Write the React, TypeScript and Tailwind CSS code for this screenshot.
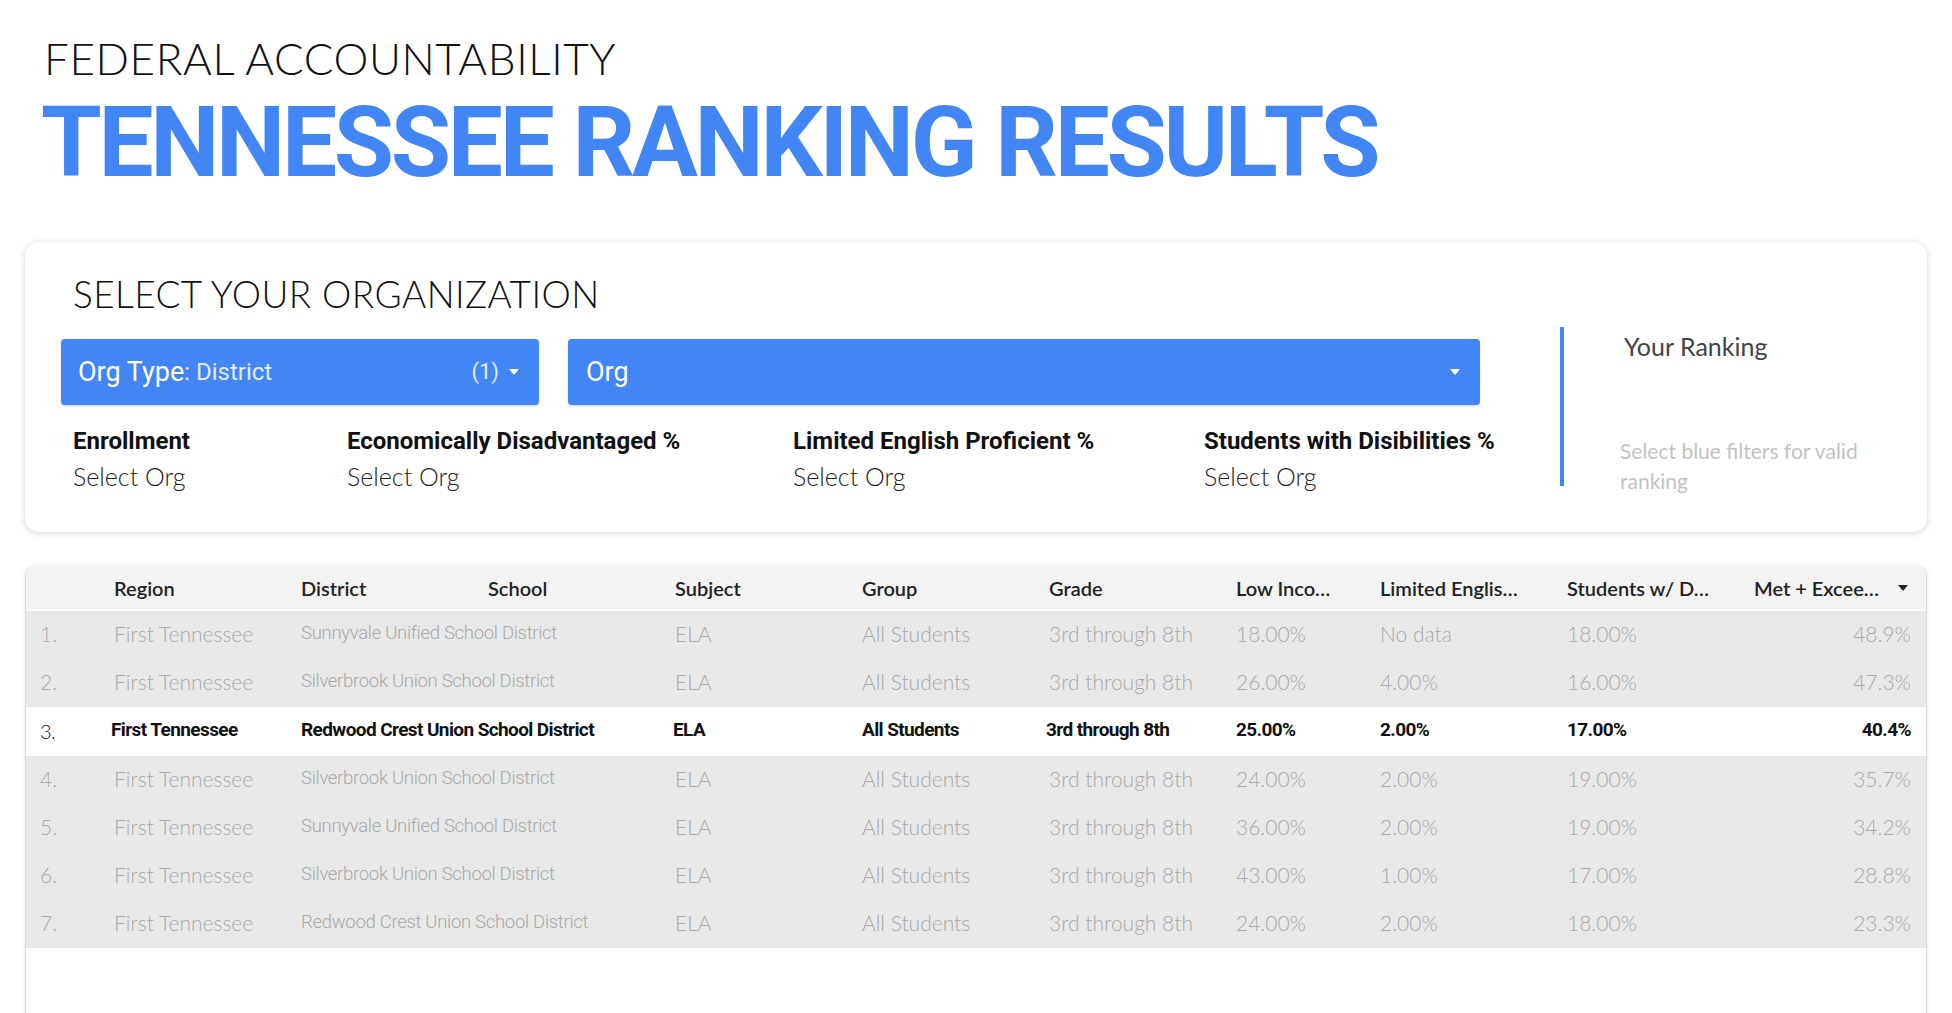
import React from "react";

const rows = [
  { n: "1.", region: "First Tennessee", district: "Sunnyvale Unified School District", low: "18.00%", lep: "No data", swd: "18.00%", met: "48.9%" },
  { n: "2.", region: "First Tennessee", district: "Silverbrook Union School District", low: "26.00%", lep: "4.00%", swd: "16.00%", met: "47.3%" },
  { n: "3.", region: "First Tennessee", district: "Redwood Crest Union School District", low: "25.00%", lep: "2.00%", swd: "17.00%", met: "40.4%", active: true },
  { n: "4.", region: "First Tennessee", district: "Silverbrook Union School District", low: "24.00%", lep: "2.00%", swd: "19.00%", met: "35.7%" },
  { n: "5.", region: "First Tennessee", district: "Sunnyvale Unified School District", low: "36.00%", lep: "2.00%", swd: "19.00%", met: "34.2%" },
  { n: "6.", region: "First Tennessee", district: "Silverbrook Union School District", low: "43.00%", lep: "1.00%", swd: "17.00%", met: "28.8%" },
  { n: "7.", region: "First Tennessee", district: "Redwood Crest Union School District", low: "24.00%", lep: "2.00%", swd: "18.00%", met: "23.3%" },
];

const cols = "grid grid-cols-[88px_187px_187px_187px_187px_187px_187px_144px_187px_187px_1fr]";

function Caret({ className = "" }: { className?: string }) {
  return (
    <svg viewBox="0 0 10 6" className={className} fill="currentColor">
      <path d="M0 0h10L5 6z" />
    </svg>
  );
}

const stats = [
  { label: "Enrollment", w: "w-[274px] shrink-0" },
  { label: "Economically Disadvantaged %", w: "w-[446px] shrink-0" },
  { label: "Limited English Proficient %", w: "w-[411px] shrink-0" },
  { label: "Students with Disibilities %", w: "min-w-0 flex-1" },
];

export default function App() {
  return (
    <div className="min-h-screen bg-white font-['Roboto',sans-serif] text-[#111]">
      {/* Page title */}
      <div className="pl-[41px] pt-[34px]">
        <div className="pl-[3px] font-['Lato',sans-serif] text-[44px] font-light leading-[48px] tracking-[0.6px] text-[#111]">
          FEDERAL ACCOUNTABILITY
        </div>
        <h1 className="mt-[11px] text-[98px] font-bold leading-[100px] tracking-[-3.3px] text-[#4285f4]">
          TENNESSEE RANKING RESULTS
        </h1>
      </div>

      {/* Organization selector */}
      <div className="mx-[25px] mt-[49px] flex h-[290px] rounded-[14px] bg-white shadow-[0_1px_6px_rgba(0,0,0,0.18)]">
        <div className="w-[1455px] shrink-0 pl-[36px] pt-[30px]">
          <div className="pl-[12px] font-['Lato',sans-serif] text-[37px] font-light leading-[44px] tracking-[0.4px] text-[#111]">
            SELECT YOUR ORGANIZATION
          </div>
          <div className="mt-[23px] flex gap-[29px]">
            <div className="flex h-[66px] w-[478px] items-center rounded-[4px] bg-[#4285f4] pl-[17px] pr-[20px] text-white shadow-[0_1px_2px_rgba(0,0,0,0.2)]">
              <span className="text-[27px] leading-none">Org Type</span>
              <span className="text-[24px] leading-none text-[#e3ecfd]">: District</span>
              <span className="ml-auto text-[22px] leading-none text-[#e3ecfd]">(1)</span>
              <Caret className="ml-[10px] h-[6px] w-[10px]" />
            </div>
            <div className="flex h-[66px] w-[912px] items-center rounded-[4px] bg-[#4285f4] pl-[18px] pr-[20px] text-white shadow-[0_1px_2px_rgba(0,0,0,0.2)]">
              <span className="text-[27px] leading-none">Org</span>
              <Caret className="ml-auto h-[6px] w-[10px]" />
            </div>
          </div>
          <div className="mt-[22px] flex pl-[12px]">
            {stats.map((s) => (
              <div key={s.label} className={`${s.w} whitespace-nowrap`}>
                <div className="text-[24px] font-bold leading-[28px] text-[#111]">{s.label}</div>
                <div className="mt-[7px] font-['Lato',sans-serif] text-[25px] font-light leading-[28px] text-[#222]">
                  Select Org
                </div>
              </div>
            ))}
          </div>
        </div>
        <div className="flex pt-[85px]">
          <div className="ml-[80px] h-[159px] w-[4px] bg-[#4285f4]" />
          <div className="ml-[56px] w-[280px] font-['Lato',sans-serif]">
            <div className="pl-[4px] pt-[5px] text-[25px] leading-[28px] text-[#444]">Your Ranking</div>
            <div className="mt-[76px] text-[21px] leading-[30px] text-[#c2c2c2]">
              Select blue filters for valid ranking
            </div>
          </div>
        </div>
      </div>

      {/* Ranking table */}
      <div className="mx-[25px] mt-[34px] h-[460px] overflow-hidden rounded-t-[10px] border-x border-[#dcdcdc] bg-white shadow-[0_0_4px_rgba(0,0,0,0.12)]">
        <div className={`${cols} h-[45px] items-center border-b-2 border-white bg-[#f3f3f3] font-['Lato',sans-serif] text-[20px] font-semibold text-[#222]`}>
          <div />
          <div>Region</div>
          <div>District</div>
          <div>School</div>
          <div>Subject</div>
          <div>Group</div>
          <div>Grade</div>
          <div>Low Inco…</div>
          <div>Limited Englis…</div>
          <div>Students w/ D…</div>
          <div className="flex items-center pr-[18px]">
            <span>Met + Excee…</span>
            <Caret className="ml-auto h-[6px] w-[10px]" />
          </div>
        </div>
        {rows.map((r) =>
          r.active ? (
            <div key={r.n} className={`${cols} h-[49px] items-center bg-white pb-[2px] text-[19px] font-bold tracking-[-0.6px] text-[#111]`}>
              <div className="pl-[14px] font-['Lato',sans-serif] text-[20px] font-light">{r.n}</div>
              <div className="-ml-[3px]">{r.region}</div>
              <div className="whitespace-nowrap">{r.district}</div>
              <div />
              <div className="-ml-[2px]">ELA</div>
              <div>All Students</div>
              <div className="-ml-[3px]">3rd through 8th</div>
              <div>{r.low}</div>
              <div>{r.lep}</div>
              <div>{r.swd}</div>
              <div className="pr-[15px] text-right">{r.met}</div>
            </div>
          ) : (
            <div key={r.n} className={`${cols} h-[48px] items-center bg-[#e8e8e8] pb-[3px] font-['Lato',sans-serif] text-[21px] font-light text-[#a9a9a9]`}>
              <div className="pl-[14px]">{r.n}</div>
              <div>{r.region}</div>
              <div className="whitespace-nowrap font-['Roboto',sans-serif] text-[18.5px] tracking-[-0.3px]">{r.district}</div>
              <div />
              <div>ELA</div>
              <div>All Students</div>
              <div>3rd through 8th</div>
              <div>{r.low}</div>
              <div>{r.lep}</div>
              <div>{r.swd}</div>
              <div className="pr-[15px] text-right">{r.met}</div>
            </div>
          )
        )}
      </div>
    </div>
  );
}
